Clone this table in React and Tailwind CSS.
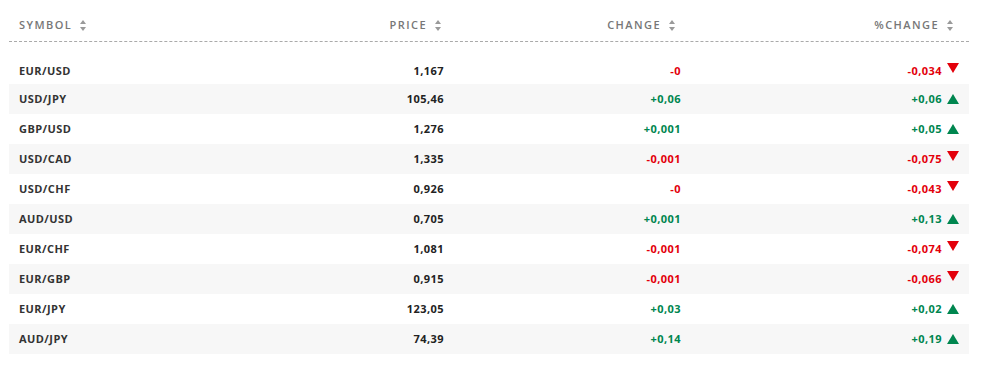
import React from "react";

const rows = [
  { symbol: "EUR/USD", price: "1,167", change: "-0", pct: "-0,034", up: false },
  { symbol: "USD/JPY", price: "105,46", change: "+0,06", pct: "+0,06", up: true },
  { symbol: "GBP/USD", price: "1,276", change: "+0,001", pct: "+0,05", up: true },
  { symbol: "USD/CAD", price: "1,335", change: "-0,001", pct: "-0,075", up: false },
  { symbol: "USD/CHF", price: "0,926", change: "-0", pct: "-0,043", up: false },
  { symbol: "AUD/USD", price: "0,705", change: "+0,001", pct: "+0,13", up: true },
  { symbol: "EUR/CHF", price: "1,081", change: "-0,001", pct: "-0,074", up: false },
  { symbol: "EUR/GBP", price: "0,915", change: "-0,001", pct: "-0,066", up: false },
  { symbol: "EUR/JPY", price: "123,05", change: "+0,03", pct: "+0,02", up: true },
  { symbol: "AUD/JPY", price: "74,39", change: "+0,14", pct: "+0,19", up: true },
];

function SortIcon() {
  return (
    <svg width="6" height="11" viewBox="0 0 6 11" className="ml-2 shrink-0">
      <path d="M3 0 L6 4 L0 4 Z" fill="#9a9a9a" />
      <path d="M3 11 L6 7 L0 7 Z" fill="#9a9a9a" />
    </svg>
  );
}

function Triangle({ up }) {
  return up ? (
    <svg width="12" height="10" viewBox="0 0 12 10" className="ml-[5px] shrink-0">
      <path d="M6 0 L12 10 L0 10 Z" fill="#00864f" />
    </svg>
  ) : (
    <svg width="12" height="10" viewBox="0 0 12 10" className="ml-[5px] shrink-0 -mt-[7px]">
      <path d="M0 0 L12 0 L6 10 Z" fill="#e3000b" />
    </svg>
  );
}

export default function App() {
  const cols = "grid grid-cols-[220px_225px_237px_278px]";
  return (
    <div className="w-[981px] h-[365px] bg-white pl-[9px] pt-[15px]" style={{ fontFamily: "'Open Sans', sans-serif" }}>
      <div className="w-[960px]">
        {/* Header */}
        <div className={`${cols} h-[27px] pb-[5px] border-b border-dashed border-[#aaa] text-[11px] font-semibold tracking-[0.13em] text-[#777]`}>
          <div className="flex items-center pl-[10px]">SYMBOL<SortIcon /></div>
          <div className="flex items-center justify-end pr-[13px]">PRICE<SortIcon /></div>
          <div className="flex items-center justify-end pr-[16px]">CHANGE<SortIcon /></div>
          <div className="flex items-center justify-end pr-[16px]">%CHANGE<SortIcon /></div>
        </div>

        <div className="mt-[16px]">
          {rows.map((r, i) => (
            <div
              key={r.symbol}
              className={`${cols} ${i === 0 ? "h-[26px]" : "h-[30px]"} text-[11px] font-bold tracking-[0.04em] ${i % 2 === 1 ? "bg-[#f7f7f7]" : "bg-white"}`}
            >
              <div className="flex items-center pl-[10px] text-[#333]">{r.symbol}</div>
              <div className="flex items-center justify-end pr-[10px] text-[#222]">{r.price}</div>
              <div className={`flex items-center justify-end pr-[10px] ${r.up ? "text-[#00864f]" : "text-[#e3000b]"}`}>
                {r.change}
              </div>
              <div className={`flex items-center justify-end pr-[10px] ${r.up ? "text-[#00864f]" : "text-[#e3000b]"}`}>
                {r.pct}
                <Triangle up={r.up} />
              </div>
            </div>
          ))}
        </div>
      </div>
    </div>
  );
}
